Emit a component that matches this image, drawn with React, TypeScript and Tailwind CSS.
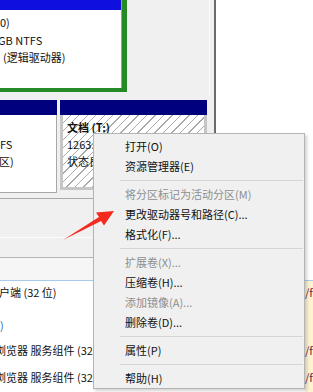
const items: (string | null | { t: string; off: true })[] = [
  "打开(O)",
  "资源管理器(E)",
  null,
  { t: "将分区标记为活动分区(M)", off: true },
  "更改驱动器号和路径(C)...",
  "格式化(F)...",
  null,
  { t: "扩展卷(X)...", off: true },
  "压缩卷(H)...",
  { t: "添加镜像(A)...", off: true },
  "删除卷(D)...",
  null,
  "属性(P)",
  null,
  "帮助(H)",
];

function ContextMenu() {
  return (
    <div className="absolute left-[93px] top-[133px] w-[212px] border border-[#b4b4b4] bg-[#f0f0f0] pt-[2px] shadow-[2px_2px_3px_rgba(0,0,0,0.18)]">
      {items.map((it, i) => {
        if (it === null) {
          return <div key={i} className="ml-[26px] mr-px mt-[4px] mb-[3px] h-px bg-[#d5d5d5]" />;
        }
        const off = typeof it !== "string";
        const label = typeof it === "string" ? it : it.t;
        return (
          <div
            key={i}
            className={`flex h-[20px] items-center whitespace-nowrap pl-[31px] text-[11px] ${
              off ? "text-[#8e8e8e]" : "text-[#111]"
            }`}
          >
            {label}
          </div>
        );
      })}
    </div>
  );
}

function Arrow() {
  return (
    <svg className="pointer-events-none absolute left-0 top-0" width="313" height="392">
      <polygon
        points="63,240 99,217 96,212.5 114,211 104,225.5 101,221"
        fill="#f52a1e"
      />
    </svg>
  );
}

export default function App() {
  return (
    <div className="relative h-[392px] w-[313px] overflow-hidden bg-[#f0f0f0] font-['Noto_Sans_CJK_SC','Liberation_Sans',sans-serif] text-[11px] text-[#111]">
      <div className="flex h-[280px]">
        {/* disk map */}
        <div className="flex w-[214px] flex-col">
          <div className="flex h-[100px]">
            <div className="h-[92px] w-[127px] border-b-[4px] border-r-[5px] border-[#268b26]">
              <div className="flex h-full flex-col border-r border-[#9c9c9c]">
                <div className="h-[10px] bg-[#1010de]" />
                <div className="flex-1 overflow-hidden whitespace-nowrap bg-white pt-[4px] leading-[17.5px]">
                  <div>0)</div>
                  <div className="-ml-[2px]">GB NTFS</div>
                  <div className="ml-[3px]">(逻辑驱动器)</div>
                </div>
              </div>
            </div>
            <div className="flex-1" />
            <div className="h-[97px] w-px bg-[#fbfbfb]" />
            <div className="w-[4px]" />
          </div>

          <div className="flex h-[93px]">
            <div className="flex w-[57px] flex-col">
              <div className="h-[15px] bg-[#00007e]" />
              <div className="flex-1 overflow-hidden whitespace-nowrap border-b border-r border-[#a8a8a8] bg-white pt-[4px] leading-[17px]">
                <div>&nbsp;</div>
                <div>FS</div>
                <div className="-ml-[1px]">区)</div>
              </div>
            </div>
            <div className="w-[3px]" />
            <div className="flex w-[147px] flex-col">
              <div className="h-[15px] bg-[#00007e]" />
              <div className="h-[75px] overflow-hidden whitespace-nowrap border-[3px] border-t-0 border-[#c6c6c6] bg-[image:repeating-linear-gradient(135deg,#ffffff_0px,#ffffff_5px,#a9a9a9_5px,#a9a9a9_6px)] pl-[4px] pt-[4px] leading-[17px]">
                <div className="font-bold">文档 (T:)</div>
                <div>1263.87 GB NTFS</div>
                <div>状态良好 (逻辑驱动器)</div>
              </div>
            </div>
          </div>

          <div className="flex flex-1 flex-col">
            <div className="h-[5px]" />
            <div className="h-px bg-[#a9a9a9]" />
            <div className="h-[38px]" />
            <div className="h-px bg-[#fcfcfc]" />
            <div className="h-[19px]" />
            <div className="h-px bg-[#b4b4b4]" />
            <div className="flex-1 bg-[#f6f6f6]" />
          </div>
        </div>
        <div className="w-[2px] bg-[#6b6b6b]" />
        <div className="flex-1 bg-white" />
      </div>

      {/* program list */}
      <div className="flex h-[112px] border-t border-[#a6cbec] bg-white">
        <div className="flex flex-1 flex-col overflow-hidden whitespace-nowrap leading-[14px]">
          <div className="-ml-[1px] mt-[4px]">户端 (32 位)</div>
          <div className="mt-[19px] text-[#2d5fc8]">)</div>
          <div className="-ml-[5px] mt-[11px]">浏览器 服务组件 (32 位)</div>
          <div className="-ml-[5px] mt-[13px]">浏览器 服务组件 (32 位)</div>
        </div>
        <div className="flex w-[8px] flex-col overflow-hidden whitespace-nowrap bg-[#fdf3d2] leading-[14px] text-[#6a1d3c]">
          <div className="mt-[4px]">/f</div>
          <div className="mt-[19px]">&nbsp;</div>
          <div className="mt-[11px]">/f</div>
          <div className="mt-[13px]">/f</div>
        </div>
      </div>

      <ContextMenu />
      <Arrow />
    </div>
  );
}
